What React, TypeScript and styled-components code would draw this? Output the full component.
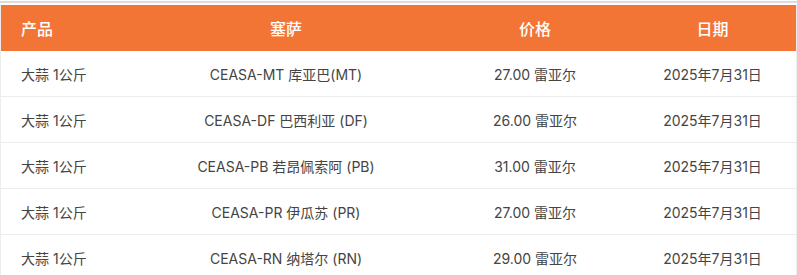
import { Fragment } from 'react';
import styled, { createGlobalStyle } from 'styled-components';

const Global = createGlobalStyle`
  html, body {
    margin: 0;
    padding: 0;
    background: #fff;
  }
  body {
    font-family: Inter, "Noto Sans CJK SC", sans-serif;
  }
`;

const Frame = styled.div`
  border-top: 2px solid #dcdcdc;
  margin-top: 1px;
  padding-top: 2px;
`;

const Table = styled.div`
  display: grid;
  grid-template-columns: 130px 310px 188px 1fr;
  border-left: 1px solid #ececec;
  border-right: 1px solid #ececec;
`;

const HeadCell = styled.div<{ $left?: boolean }>`
  height: 46px;
  display: flex;
  align-items: center;
  justify-content: ${(p) => (p.$left ? 'flex-start' : 'center')};
  padding-left: ${(p) => (p.$left ? '20px' : '0')};
  background: #f37536;
  color: #fff;
  font-size: 16px;
  font-weight: 500;
`;

const Cell = styled.div<{ $left?: boolean }>`
  height: 45px;
  display: flex;
  align-items: center;
  justify-content: ${(p) => (p.$left ? 'flex-start' : 'center')};
  padding-left: ${(p) => (p.$left ? '20px' : '0')};
  border-bottom: 1px solid #ececec;
  color: #444;
  font-size: 14px;
  white-space: nowrap;
`;

const rows = [
  { ceasa: 'CEASA-MT 库亚巴(MT)', price: '27.00 雷亚尔' },
  { ceasa: 'CEASA-DF 巴西利亚 (DF)', price: '26.00 雷亚尔' },
  { ceasa: 'CEASA-PB 若昂佩索阿 (PB)', price: '31.00 雷亚尔' },
  { ceasa: 'CEASA-PR 伊瓜苏 (PR)', price: '27.00 雷亚尔' },
  { ceasa: 'CEASA-RN 纳塔尔 (RN)', price: '29.00 雷亚尔' },
];

export default function App() {
  return (
    <>
      <Global />
      <Frame>
        <Table>
          <HeadCell $left>产品</HeadCell>
          <HeadCell>塞萨</HeadCell>
          <HeadCell>价格</HeadCell>
          <HeadCell>日期</HeadCell>
          {rows.map((r) => (
            <Fragment key={r.ceasa}>
              <Cell $left>大蒜 1公斤</Cell>
              <Cell>{r.ceasa}</Cell>
              <Cell>{r.price}</Cell>
              <Cell>2025年7月31日</Cell>
            </Fragment>
          ))}
        </Table>
      </Frame>
    </>
  );
}
